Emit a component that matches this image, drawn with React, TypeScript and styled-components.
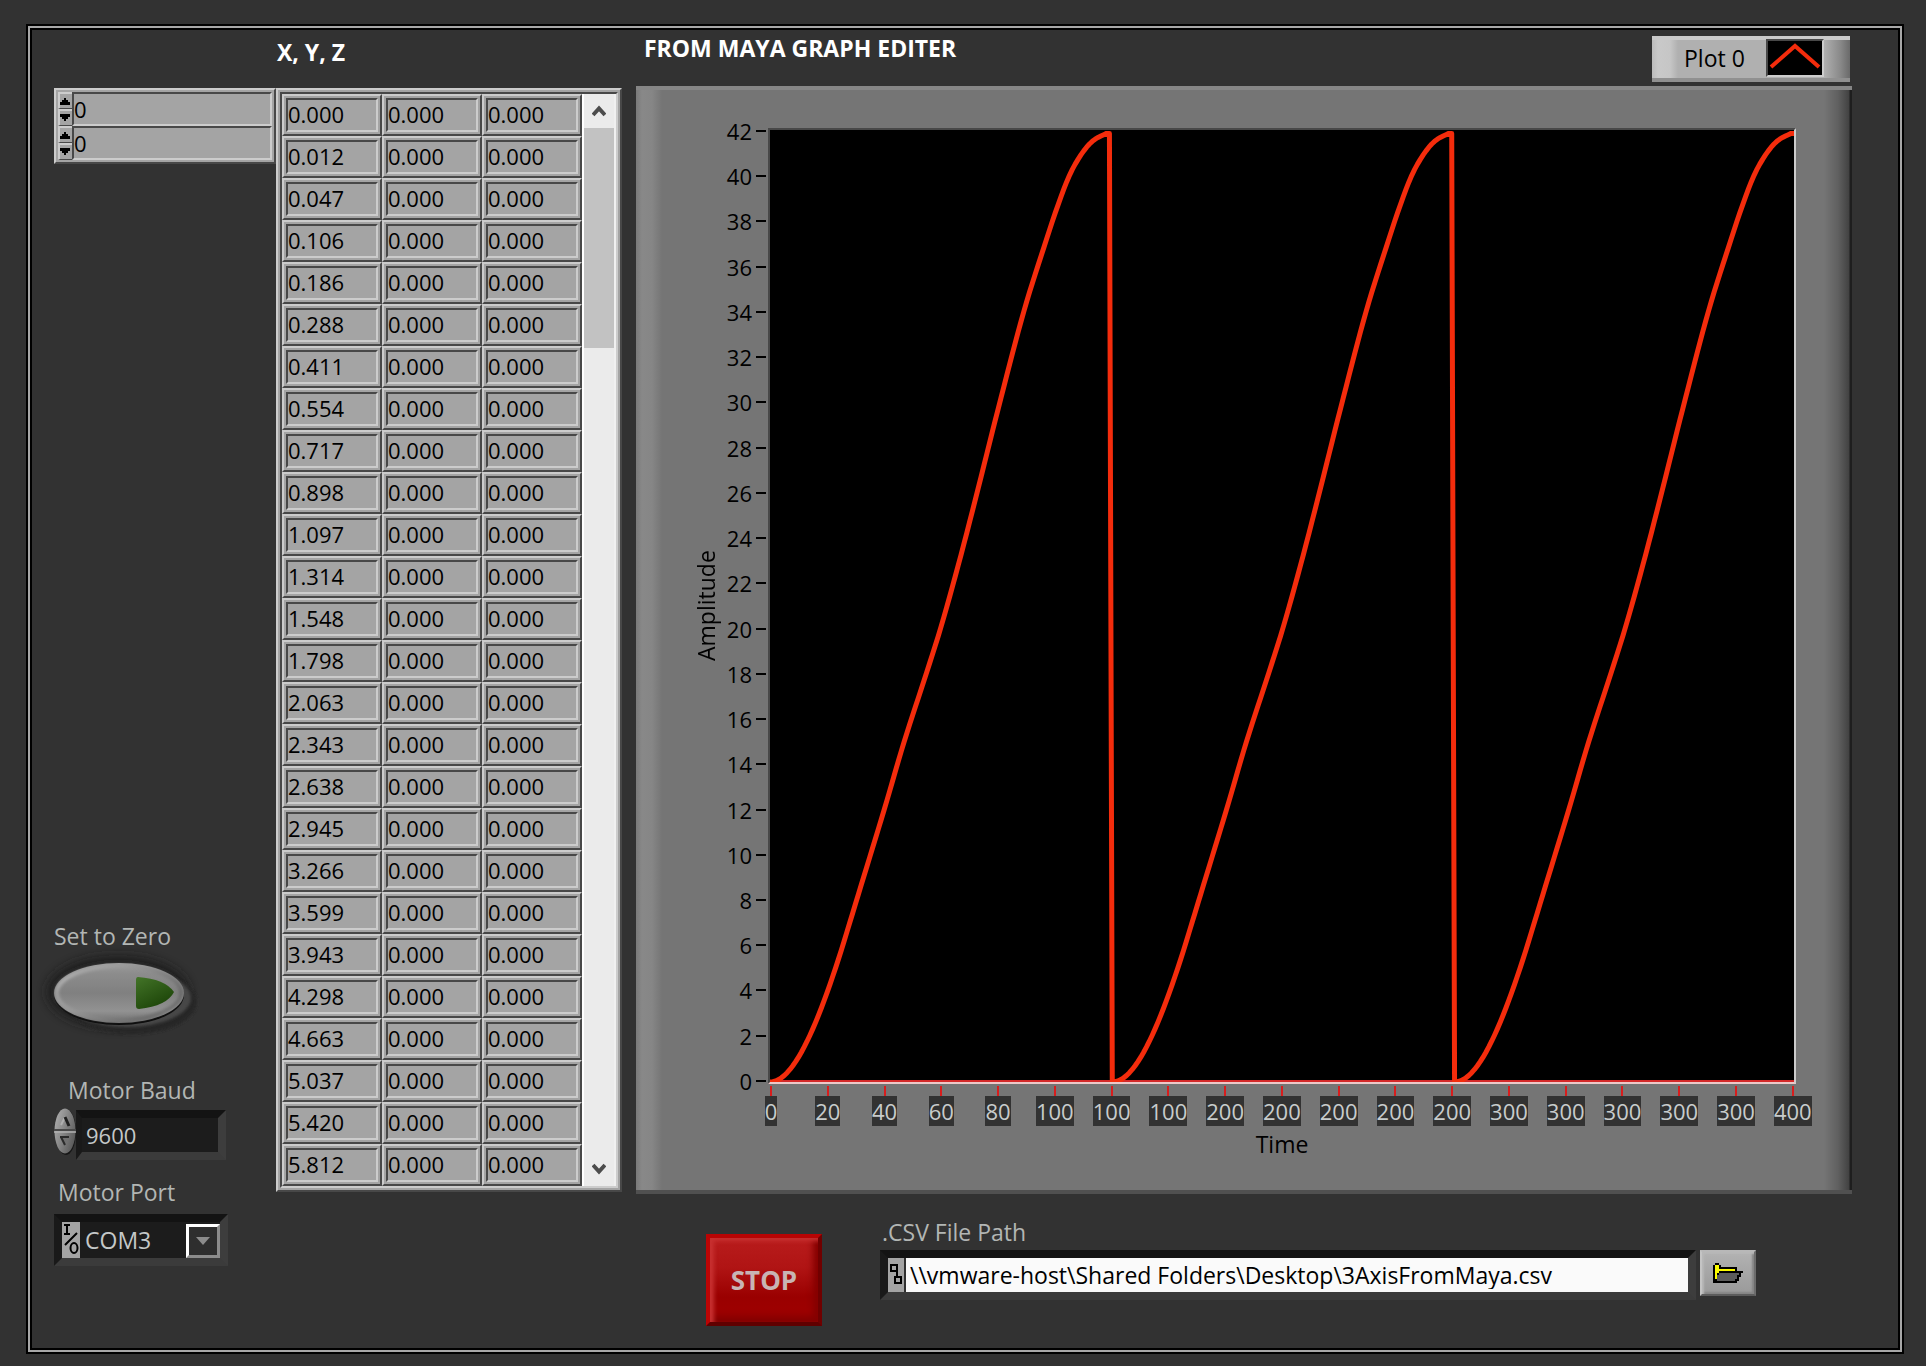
import React, { useState } from 'react';
import styled, { createGlobalStyle, css } from 'styled-components';

const LIGHT = '#cccccc';
const MID = '#a4a4a4';
const DARK = '#484848';
const PAGE = '#323232';
const TRACE = '#f42c0c';

const GlobalStyle = createGlobalStyle`
  *, *::before, *::after { box-sizing: border-box; }
  body {
    margin: 0;
    background: ${PAGE};
    color: #000;
    font-family: 'Open Sans', 'Noto Sans', sans-serif;
    font-size: 22px;
    line-height: 28px;
  }
  button, input, select { font: inherit; color: inherit; margin: 0; padding: 0; border-radius: 0; }
`;

const raised = css`
  border: 2px solid;
  border-color: ${LIGHT} ${DARK} ${DARK} ${LIGHT};
`;

const sunken = css`
  border: 2px solid;
  border-color: ${DARK} ${LIGHT} ${LIGHT} ${DARK};
`;

const well = css`
  border: 8px solid;
  border-color: #131313 #3d3d3d #3b3b3b #191919;
  border-left-width: 6px;
  background: #1c1c1c;
  color: #c4c8c8;
`;

const Page = styled.div`
  display: flex;
  min-height: 100vh;
  padding: 24px 22px 12px 26px;
`;

const Frame = styled.main`
  flex: 1;
  display: flex;
  min-width: 0;
  padding: 4px 50px 26px 26px;
  border: 2px solid #000;
  box-shadow: inset 0 0 0 2px #a8a8a8, inset 0 0 0 4px #000;
`;

/* ---------- left controls ---------- */

const Side = styled.section`
  flex: none;
  display: flex;
  flex-direction: column;
  width: 222px;
  padding: 58px 0 60px;
`;

const IndexBox = styled.div`
  ${raised}
  padding: 2px;
  background: ${MID};
`;

const IndexRow = styled.div`
  display: flex;
  height: 34px;
`;

const Stepper = styled.div`
  display: flex;
  flex-direction: column;
  width: 14px;
`;

const StepButton = styled.button`
  flex: 1;
  display: flex;
  min-height: 0;
  border: 0;
  border-top: 2px solid ${LIGHT};
  border-left: 2px solid ${LIGHT};
  border-bottom: 1px solid ${DARK};
  background: ${MID};
`;

const IndexInput = styled.input`
  ${sunken}
  flex: 1;
  min-width: 0;
  background: ${MID};
`;

const Controls = styled.div`
  display: flex;
  flex-direction: column;
  gap: 18px;
  margin-top: auto;
`;

const Field = styled.div<{ $gap: number }>`
  display: flex;
  flex-direction: column;
  gap: ${(p) => p.$gap}px;
`;

const Caption = styled.label<{ $indent?: number }>`
  padding-left: ${(p) => p.$indent ?? 0}px;
  color: #b2b6b4;
  font-size: 23px;
`;

const Title = styled.h2`
  margin: 0;
  color: #fff;
  font-size: 23px;
  font-weight: 700;
  line-height: 24px;
`;

const OvalButton = styled.button`
  align-self: flex-start;
  display: block;
  width: 150px;
  height: 90px;
  margin-bottom: 18px;
  border: 0;
  background: none;
  svg { display: block; overflow: visible; }
`;

const BaudRow = styled.div`
  display: flex;
  align-items: flex-end;
  height: 52px;
`;

const OvalStepper = styled.div`
  position: relative;
  width: 22px;
  height: 52px;
  svg { display: block; }
`;

const OvalStep = styled.button<{ $down?: boolean }>`
  position: absolute;
  left: 0;
  top: ${(p) => (p.$down ? 24 : 0)}px;
  width: 22px;
  height: 22px;
  border: 0;
  background: none;
`;

const BaudInput = styled.input`
  ${well}
  width: 150px;
  height: 50px;
  padding-left: 4px;
`;

const PortBox = styled.div`
  ${well}
  position: relative;
  display: flex;
  align-items: stretch;
  width: 174px;
  height: 52px;
  border-left-width: 8px;
  svg { flex: none; display: block; }
`;

const PortSelect = styled.select`
  appearance: none;
  flex: 1;
  min-width: 0;
  padding-left: 5px;
  border: 0;
  background: #1c1c1c;
  font-size: 23px;
`;

const DropMark = styled.span`
  position: absolute;
  right: 0;
  top: 2px;
  display: grid;
  place-items: center;
  width: 34px;
  height: 34px;
  border: 3px solid;
  border-color: #fff #8c8c8c #8c8c8c #fff;
  background: #2e2e2e;
  pointer-events: none;
`;

/* ---------- table ---------- */

const TableSection = styled.section`
  flex: none;
  width: 346px;
`;

const TableHeader = styled.header`
  height: 58px;
  padding: 10px 1px 0;
`;

const TableBox = styled.div`
  ${raised}
  padding: 2px;
  background: ${MID};
`;

const TableWell = styled.div`
  ${sunken}
  display: flex;
`;

const Table = styled.table`
  flex: 1;
  table-layout: fixed;
  border-collapse: separate;
  border-spacing: 0;
`;

const Cell = styled.td`
  ${raised}
  padding: 2px;
  background: ${MID};
`;

const CellValue = styled.span`
  ${sunken}
  display: block;
  height: 34px;
  line-height: 29px;
`;

const ScrollTrack = styled.div`
  display: flex;
  flex-direction: column;
  width: 34px;
  border-left: 2px solid #fff;
  border-right: 2px solid #f0f0f0;
  background: #ebebeb;
`;

const ScrollButton = styled.button`
  display: grid;
  place-items: center;
  height: 34px;
  border: 0;
  background: none;
`;

const ScrollLane = styled.div`
  flex: 1;
`;

const Thumb = styled.div`
  height: 220px;
  background: #c2c2c2;
`;

/* ---------- graph ---------- */

const Main = styled.section`
  flex: 1;
  display: flex;
  flex-direction: column;
  min-width: 0;
  margin-left: 14px;
`;

const Header = styled.header`
  display: flex;
  justify-content: space-between;
  align-items: flex-start;
  padding: 6px 2px 4px 8px;
`;

const Legend = styled.div`
  display: flex;
  align-items: center;
  justify-content: space-between;
  width: 198px;
  height: 46px;
  padding: 0 26px 2px 32px;
  border-top: 4px solid #cacaca;
  border-bottom: 4px solid #909090;
  background: linear-gradient(90deg, #bcbcbc 0, #c9c9c9 6px, #c6c6c6 18px, #b0b0b0 26px, #b0b0b0 172px, #8a8a8a 188px, #6a6a6a 198px);
  font-size: 23px;
`;

const LegendSwatch = styled.div`
  ${sunken}
  height: 38px;
  width: 58px;
  background: #000;
  svg { display: block; }
`;

const Panel = styled.div`
  flex: 1;
  display: grid;
  grid-template-columns: 28px 48px 1fr;
  grid-template-rows: 1fr auto auto;
  padding: 38px 56px 32px 56px;
  border-top: 4px solid #868686;
  border-bottom: 4px solid #505050;
  background: linear-gradient(90deg, #7a7a7a 0, #888888 6px, #868686 16px, #757575 26px, #757575 calc(100% - 28px), #606060 calc(100% - 14px), #424242 calc(100% - 3px), #1e1e1e calc(100% - 2px), #1e1e1e 100%);
  background-origin: border-box;
`;

const AxisName = styled.div<{ $vertical?: boolean }>`
  text-align: center;
  font-size: 23px;
  ${(p) =>
    p.$vertical
      ? css`
          writing-mode: vertical-rl;
          transform: rotate(180deg);
        `
      : css`
          grid-column: 3;
          margin-top: 4px;
        `}
`;

const YAxis = styled.div`
  display: flex;
  flex-direction: column;
  justify-content: space-between;
  margin: -7px 2px -7px 0;
`;

const YTick = styled.div`
  display: flex;
  align-items: center;
  justify-content: flex-end;
  gap: 4px;
  height: 20px;
  line-height: 20px;
  &::after {
    content: '';
    width: 10px;
    height: 2px;
    background: #000;
  }
`;

const Plot = styled.div`
  ${sunken}
  border-bottom-color: #ecc8c8;
  position: relative;
  min-height: 400px;
  background: #000;
  svg { position: absolute; inset: 0; width: 100%; height: 100%; }
`;

const XAxis = styled.div`
  grid-column: 3;
  display: flex;
  justify-content: space-between;
  margin: 2px 2px 0;
`;

const XTick = styled.div`
  display: flex;
  flex-direction: column;
  align-items: center;
  width: 2px;
  &::before {
    content: '';
    width: 2px;
    height: 10px;
    background: #d81c1c;
  }
`;

const XLabel = styled.span`
  background: ${PAGE};
  color: #c8cccc;
  line-height: 30px;
`;

/* ---------- footer ---------- */

const Footer = styled.footer`
  display: flex;
  align-items: flex-start;
  gap: 58px;
  padding: 24px 96px 0 70px;
`;

const StopButton = styled.button`
  flex: none;
  width: 116px;
  height: 92px;
  margin-top: 16px;
  border: 4px solid;
  border-color: #b80404 #700000 #600000 #bc0404;
  background: linear-gradient(#b81c1c 0, #b01414 35%, #9a0000 70%, #a00000 100%);
  box-shadow: inset 4px 3px 4px #c83030, inset -5px -6px 6px #840000;
  color: #c8b4b4;
  font-size: 26px;
  font-weight: 700;
`;

const PathField = styled.div`
  flex: 1;
  display: flex;
  flex-direction: column;
  gap: 4px;
  min-width: 0;
`;

const PathRow = styled.div`
  display: flex;
  gap: 4px;
`;

const PathWell = styled.div`
  ${well}
  flex: 1;
  display: flex;
  min-width: 0;
  height: 50px;
  border-left-width: 8px;
  svg { flex: none; display: block; }
`;

const PathInput = styled.input`
  flex: 1;
  min-width: 0;
  padding-left: 4px;
  border: 0;
  background: #fafafa;
  color: #000;
  font-size: 23px;
`;

const BrowseButton = styled.button`
  display: grid;
  place-items: center;
  width: 56px;
  height: 46px;
  border: 2px solid;
  border-color: #b8b8b8 #6c6c6c #5c5c5c #c4c4c4;
  background: linear-gradient(#b2b2b2, #9a9a9a);
  box-shadow: inset 2px 2px 2px #b8b8b8, inset -2px -2px 2px #848484;
`;

/* ---------- data ---------- */

const xs = [
  '0.000', '0.012', '0.047', '0.106', '0.186', '0.288', '0.411', '0.554', '0.717',
  '0.898', '1.097', '1.314', '1.548', '1.798', '2.063', '2.343', '2.638', '2.945',
  '3.266', '3.599', '3.943', '4.298', '4.663', '5.037', '5.420', '5.812',
];

const yTicks = Array.from({ length: 22 }, (_, i) => 42 - i * 2);

const xTicks = [
  0, 20, 40, 60, 80, 100, 100, 100, 200, 200, 200, 200, 200, 300, 300, 300, 300, 300, 400,
];

const knots: [number, number][] = [
  ...xs.map((v, i): [number, number] => [i, parseFloat(v)]),
  [32, 8.7], [40, 12], [47, 15], [55, 18.1], [60, 20.1], [66, 22.8], [72, 25.7],
  [80, 29.7], [89, 34], [97, 37.2], [101, 38.7], [105, 40], [109, 40.9], [113, 41.5], [118, 41.85], [119, 41.85],
];

const slopeAt = (i: number) => {
  const a = knots[Math.max(0, i - 1)];
  const b = knots[Math.min(knots.length - 1, i + 1)];
  return (b[1] - a[1]) / (b[0] - a[0]);
};

const sample = (n: number) => {
  const i = Math.max(0, knots.findIndex((k) => k[0] >= n) - 1);
  const [x0, y0] = knots[i];
  const [x1, y1] = knots[i + 1];
  const h = x1 - x0;
  const t = (n - x0) / h;
  const t2 = t * t;
  const t3 = t2 * t;
  return (
    (2 * t3 - 3 * t2 + 1) * y0 +
    (t3 - 2 * t2 + t) * h * slopeAt(i) +
    (3 * t2 - 2 * t3) * y1 +
    (t3 - t2) * h * slopeAt(i + 1)
  );
};

const trace = Array.from({ length: 360 }, (_, n) => `${n},${(42 - sample(n % 120)).toFixed(3)}`).join(' ');

/* ---------- drawings ---------- */

const Triangle = ({ down }: { down?: boolean }) => (
  <svg width="12" height="14" viewBox="0 0 12 14" aria-hidden="true">
    <path d={down ? 'M0 3h10v3h-2v2h-2v2h-2v-2h-2v-2h-2z' : 'M0 11h10v-3h-2v-2h-2v-2h-2v2h-2v2h-2z'} />
  </svg>
);

const Chevron = ({ down }: { down?: boolean }) => (
  <svg width="14" height="12" viewBox="0 0 14 12" fill="none" stroke="#4c4c4c" strokeWidth="4" aria-hidden="true">
    <path d={down ? 'M1 2l6 6.5l6-6.5' : 'M1 10l6-6.5l6 6.5'} />
  </svg>
);

const OvalDrawing = () => (
  <svg width="150" height="90" viewBox="0 0 150 90" aria-hidden="true">
    <defs>
      <linearGradient id="oval" x1="0" y1="0" x2="0" y2="1">
        <stop offset="0" stopColor="#9c9c9c" />
        <stop offset=".18" stopColor="#8c8c8c" />
        <stop offset=".5" stopColor="#808080" />
        <stop offset=".8" stopColor="#929292" />
        <stop offset="1" stopColor="#707070" />
      </linearGradient>
      <linearGradient id="rim" x1="0" y1="0" x2="1" y2=".5">
        <stop offset="0" stopColor="#ffffff" />
        <stop offset=".2" stopColor="#b4b4b4" />
        <stop offset=".6" stopColor="#8c8c8c" />
        <stop offset="1" stopColor="#5c5c5c" />
      </linearGradient>
      <linearGradient id="lamp" x1="0" y1="0" x2=".6" y2="1">
        <stop offset="0" stopColor="#437428" />
        <stop offset="1" stopColor="#1c4408" />
      </linearGradient>
      <filter id="soft" x="-20%" y="-30%" width="140%" height="160%"><feGaussianBlur stdDeviation="5" /></filter>
      <filter id="edge" x="-20%" y="-30%" width="140%" height="160%"><feGaussianBlur stdDeviation="1.5" /></filter>
    </defs>
    <ellipse cx="64" cy="42" rx="72" ry="37" fill="#1c1c1c" opacity=".8" filter="url(#soft)" />
    <ellipse cx="78" cy="52" rx="65" ry="32" fill="#282828" filter="url(#edge)" />
    <ellipse cx="73" cy="48" rx="64" ry="29" fill="#464646" filter="url(#edge)" />
    <ellipse cx="65" cy="45" rx="65" ry="30" fill="#0a0a0a" />
    <ellipse cx="65" cy="43" rx="65" ry="30" fill="url(#oval)" />
    <ellipse cx="65" cy="43" rx="62" ry="27" fill="none" stroke="url(#rim)" strokeWidth="4" opacity=".6" filter="url(#edge)" />
    <path d="M84 27q27 2 36 15q-7 14-35 17q-3 0-3-3v-26q0-3 2-3z" fill="url(#lamp)" />
  </svg>
);

const StepperDrawing = () => (
  <svg width="22" height="52" viewBox="0 0 22 52" aria-hidden="true">
    <defs>
      <linearGradient id="step" x1="0" y1="0" x2="1" y2=".6">
        <stop offset="0" stopColor="#b4b4b4" />
        <stop offset=".5" stopColor="#8a8a8a" />
        <stop offset="1" stopColor="#5c5c5c" />
      </linearGradient>
    </defs>
    <ellipse cx="12" cy="24" rx="10" ry="23" fill="#161616" />
    <ellipse cx="11" cy="23" rx="10.5" ry="22.5" fill="url(#step)" />
    <path d="M0 22h22" stroke="#484848" strokeWidth="2" />
    <path d="M0 24h22" stroke="#b0b0b0" strokeWidth="1.5" />
    <path d="M7 17l4-8" stroke="#b0b0b0" strokeWidth="2" />
    <path d="M11 9l4 9" stroke="#202020" strokeWidth="3" />
    <path d="M6 29h9l-4 8z" fill="#707070" />
    <path d="M6 29h9M7 29l4 8" stroke="#2a2a2a" strokeWidth="2" />
  </svg>
);

const IoMark = () => (
  <svg width="18" height="36" viewBox="0 0 18 36" aria-hidden="true">
    <rect width="18" height="36" fill={MID} />
    <path d="M2 3h6M5 3v9M2 12h6M3 23L15 11" fill="none" stroke="#000" strokeWidth="2" />
    <ellipse cx="12" cy="26" rx="3.5" ry="5" fill="none" stroke="#000" strokeWidth="2" />
  </svg>
);

const PathMark = () => (
  <svg width="18" height="34" viewBox="0 0 18 34" aria-hidden="true">
    <rect width="16" height="34" fill={MID} />
    <rect x="16" width="2" height="34" fill="#303030" />
    <path d="M3 7h6v6h-6zM9 10v9M7 19h6v6h-6z" fill="none" stroke="#000" strokeWidth="2" />
  </svg>
);

const FolderMark = () => (
  <svg width="30" height="20" viewBox="0 0 15 10" shapeRendering="crispEdges" aria-hidden="true">
    <path d="M0 1h1V0h2v1h1v1h8v2h3v1h-1v2h-1v2h-1v1H0z" fill="#000" />
    <path d="M1 1h2v2h8v1H3v1H2v3H1z" fill="#fcfc00" />
    <path d="M3 5h10v1h-1v2h-1v1H2V6h1z" fill="#5c5c5c" />
  </svg>
);

/* ---------- parts ---------- */

const IndexControl = ({ name }: { name: string }) => {
  const [value, setValue] = useState(0);
  return (
    <IndexRow>
      <Stepper>
        <StepButton type="button" aria-label={`Increase ${name}`} onClick={() => setValue(value + 1)}>
          <Triangle />
        </StepButton>
        <StepButton type="button" aria-label={`Decrease ${name}`} onClick={() => setValue(Math.max(0, value - 1))}>
          <Triangle down />
        </StepButton>
      </Stepper>
      <IndexInput aria-label={name} value={value} onChange={(e) => setValue(Number(e.target.value) || 0)} />
    </IndexRow>
  );
};

export default function App() {
  const [baud, setBaud] = useState(9600);
  return (
    <>
      <GlobalStyle />
      <Page>
        <Frame>
          <Side>
            <IndexBox>
              <IndexControl name="Row index" />
              <IndexControl name="Column index" />
            </IndexBox>
            <Controls>
              <Field $gap={0}>
                <Caption htmlFor="zero">Set to Zero</Caption>
                <OvalButton id="zero" type="button">
                  <OvalDrawing />
                </OvalButton>
              </Field>
              <Field $gap={4}>
                <Caption htmlFor="baud" $indent={14}>Motor Baud</Caption>
                <BaudRow>
                  <OvalStepper>
                    <StepperDrawing />
                    <OvalStep type="button" aria-label="Increase baud" onClick={() => setBaud(baud * 2)} />
                    <OvalStep type="button" $down aria-label="Decrease baud" onClick={() => setBaud(Math.round(baud / 2))} />
                  </OvalStepper>
                  <BaudInput id="baud" value={baud} onChange={(e) => setBaud(Number(e.target.value) || 0)} />
                </BaudRow>
              </Field>
              <Field $gap={8}>
                <Caption htmlFor="port" $indent={4}>Motor Port</Caption>
                <PortBox>
                  <IoMark />
                  <PortSelect id="port" defaultValue="COM3">
                    <option>COM3</option>
                  </PortSelect>
                  <DropMark>
                    <svg width="14" height="8" viewBox="0 0 14 8" aria-hidden="true">
                      <path d="M0 0h14l-7 8z" fill="#8c8c8c" />
                    </svg>
                  </DropMark>
                </PortBox>
              </Field>
            </Controls>
          </Side>

          <TableSection>
            <TableHeader>
              <Title>X, Y, Z</Title>
            </TableHeader>
            <TableBox>
              <TableWell>
                <Table aria-label="X, Y, Z">
                  <tbody>
                    {xs.map((x) => (
                      <tr key={x}>
                        <Cell><CellValue>{x}</CellValue></Cell>
                        <Cell><CellValue>0.000</CellValue></Cell>
                        <Cell><CellValue>0.000</CellValue></Cell>
                      </tr>
                    ))}
                  </tbody>
                </Table>
                <ScrollTrack>
                  <ScrollButton type="button" aria-label="Scroll up"><Chevron /></ScrollButton>
                  <ScrollLane><Thumb /></ScrollLane>
                  <ScrollButton type="button" aria-label="Scroll down"><Chevron down /></ScrollButton>
                </ScrollTrack>
              </TableWell>
            </TableBox>
          </TableSection>

          <Main>
            <Header>
              <Title>FROM MAYA GRAPH EDITER</Title>
              <Legend>
                Plot 0
                <LegendSwatch>
                  <svg width="54" height="34" viewBox="0 0 54 34" aria-hidden="true">
                    <path d="M3 26L27 5L51 26" fill="none" stroke={TRACE} strokeWidth="4" />
                  </svg>
                </LegendSwatch>
              </Legend>
            </Header>
            <Panel>
              <AxisName $vertical>Amplitude</AxisName>
              <YAxis>
                {yTicks.map((v) => <YTick key={v}>{v}</YTick>)}
              </YAxis>
              <Plot>
                <svg viewBox="0 0 359 42" preserveAspectRatio="none" role="img" aria-label="Amplitude over time">
                  <path d="M0 42H359" stroke="#d42828" strokeWidth="4" vectorEffect="non-scaling-stroke" />
                  <polyline points={trace} fill="none" stroke={TRACE} strokeWidth="5" strokeLinejoin="round" vectorEffect="non-scaling-stroke" />
                </svg>
              </Plot>
              <XAxis>
                {xTicks.map((v, i) => <XTick key={i}><XLabel>{v}</XLabel></XTick>)}
              </XAxis>
              <AxisName>Time</AxisName>
            </Panel>
            <Footer>
              <StopButton type="button">STOP</StopButton>
              <PathField>
                <Caption htmlFor="path" $indent={2}>.CSV File Path</Caption>
                <PathRow>
                  <PathWell>
                    <PathMark />
                    <PathInput id="path" defaultValue={'\\\\vmware-host\\Shared Folders\\Desktop\\3AxisFromMaya.csv'} />
                  </PathWell>
                  <BrowseButton type="button" aria-label="Browse"><FolderMark /></BrowseButton>
                </PathRow>
              </PathField>
            </Footer>
          </Main>
        </Frame>
      </Page>
    </>
  );
}
